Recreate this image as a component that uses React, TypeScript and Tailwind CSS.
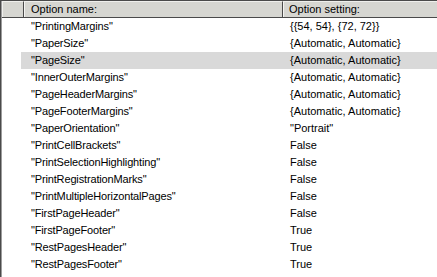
import React from "react";

const rows: [string, string][] = [
  ['"PrintingMargins"', "{{54, 54}, {72, 72}}"],
  ['"PaperSize"', "{Automatic, Automatic}"],
  ['"PageSize"', "{Automatic, Automatic}"],
  ['"InnerOuterMargins"', "{Automatic, Automatic}"],
  ['"PageHeaderMargins"', "{Automatic, Automatic}"],
  ['"PageFooterMargins"', "{Automatic, Automatic}"],
  ['"PaperOrientation"', '"Portrait"'],
  ['"PrintCellBrackets"', "False"],
  ['"PrintSelectionHighlighting"', "False"],
  ['"PrintRegistrationMarks"', "False"],
  ['"PrintMultipleHorizontalPages"', "False"],
  ['"FirstPageHeader"', "False"],
  ['"FirstPageFooter"', "True"],
  ['"RestPagesHeader"', "True"],
  ['"RestPagesFooter"', "True"],
];

export default function App() {
  return (
    <div
      className="w-[437px] h-[277px] bg-white border-t border-l border-[#4a4a4a] overflow-hidden text-[11px] text-black"
      style={{ fontFamily: '"Liberation Sans", Arial, sans-serif' }}
    >
      <div className="h-full border-l border-[#9c9c9c]">
        <div className="flex h-[17px] bg-[#d6d6d1] border-b border-[#4a4a4a]">
          <div className="w-[22px] border-r border-[#4a4a4a] border-l border-l-[#efefec] border-t border-t-[#efefec]" />
          <div className="w-[259px] border-r border-[#4a4a4a] border-l border-l-[#f4f4f2] border-t border-t-[#efefec] pl-[6px] flex items-center leading-none">
            Option name:
          </div>
          <div className="flex-1 border-l border-l-[#f4f4f2] border-t border-t-[#efefec] pl-[5px] flex items-center leading-none">
            Option setting:
          </div>
        </div>
        {rows.map(([name, value], i) => (
          <div key={name} className="flex h-[17px]">
            <div className="w-[19px]" />
            <div className={`flex flex-1 items-center leading-none ${i === 2 ? "bg-[#d9d9d9]" : ""}`}>
              <div className="w-[262px] pl-[10px] tracking-[-0.15px]">{name}</div>
              <div className="flex-1 pl-[7px]">{value}</div>
            </div>
          </div>
        ))}
      </div>
    </div>
  );
}
